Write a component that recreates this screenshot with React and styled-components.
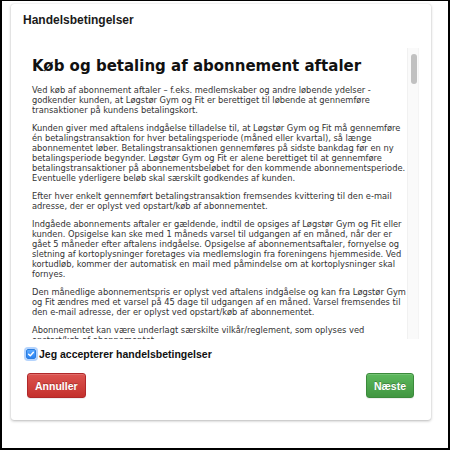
import React, { useState } from "react";
import styled, { createGlobalStyle } from "styled-components";

const GlobalStyle = createGlobalStyle`
  * { box-sizing: border-box; }
  html, body { margin: 0; padding: 0; background: #fff; }
  body { font-family: "Liberation Sans", Arial, sans-serif; }
`;

const sections = [
  {
    title: "Priser og betaling",
    text: [
      "Alle priser er oplyst i danske kroner inklusive moms. Løgstør Gym og Fit forbeholder sig retten til at ændre priserne uden varsel for nye abonnementer. Betaling sker med betalingskort via en sikker betalingsløsning.",
      "Ved manglende betaling sendes en påmindelse til kunden. Betales beløbet ikke inden for den angivne frist, kan adgangen til centret blive spærret, indtil betalingen er gennemført.",
    ],
  },
  {
    title: "Fortrydelsesret",
    text: [
      "Der gives 14 dages fortrydelsesret ved køb af abonnementer via hjemmesiden. Fristen regnes fra den dag, hvor aftalen er indgået. Ønsker kunden at gøre brug af fortrydelsesretten, skal dette meddeles skriftligt til Løgstør Gym og Fit inden fristens udløb.",
      "Har kunden benyttet centret i fortrydelsesperioden, fratrækkes et forholdsmæssigt beløb for den periode, hvor abonnementet har været anvendt.",
    ],
  },
  {
    title: "Adgang og brug af centret",
    text: [
      "Abonnementet er personligt og må ikke overdrages til andre. Adgangskort eller adgangskode må ikke udlånes. Misbrug kan medføre øjeblikkelig ophævelse af abonnementet uden refusion af indbetalte beløb.",
      "Kunden er forpligtet til at følge centrets ordensregler samt anvisninger fra personalet. Træning sker på eget ansvar, og Løgstør Gym og Fit kan ikke gøres ansvarlig for skader opstået i forbindelse med træning.",
    ],
  },
  {
    title: "Pause i abonnementet",
    text: [
      "Ved sygdom, skade eller graviditet kan abonnementet sættes i bero mod fremvisning af dokumentation. Pausen skal aftales med Løgstør Gym og Fit og kan tidligst træde i kraft fra den efterfølgende måned.",
    ],
  },
  {
    title: "Persondata",
    text: [
      "Løgstør Gym og Fit behandler kundens personoplysninger i overensstemmelse med gældende lovgivning. Oplysningerne anvendes alene til administration af medlemskabet og videregives ikke til tredjemand uden kundens samtykke.",
      "Kortoplysninger opbevares ikke af Løgstør Gym og Fit, men håndteres af en godkendt betalingsudbyder. Kunden har til enhver tid ret til indsigt i de oplysninger, der er registreret om vedkommende.",
    ],
  },
  {
    title: "Klageadgang",
    text: [
      "Eventuelle klager over købet rettes i første omgang til Løgstør Gym og Fit. Fører henvendelsen ikke til en løsning, kan kunden indgive en klage til Center for Klageløsning via Forbrugerstyrelsens hjemmeside.",
      "Ved klage skal kunden angive sin e-mail adresse. Klagen behandles så hurtigt som muligt, og kunden vil modtage svar senest 14 dage efter, at klagen er modtaget.",
    ],
  },
  {
    title: "Ændring af betingelser",
    text: [
      "Løgstør Gym og Fit kan ændre disse handelsbetingelser med et varsel på mindst 30 dage. Ændringer meddeles til den e-mail adresse, der er oplyst ved opstart/køb af abonnementet, samt på foreningens hjemmeside.",
    ],
  },
];

const THUMB = 30;
const TRACK = 291 - 12;

const Check = () => (
  <svg width="8" height="8" viewBox="0 0 8 8">
    <path
      d="M1.6 4.2 L3.3 5.8 L6.4 2.2"
      fill="none"
      stroke="#fff"
      strokeWidth="1.4"
      strokeLinecap="round"
      strokeLinejoin="round"
    />
  </svg>
);

const App = () => {
  const [accepted, setAccepted] = useState(true);
  const [scrolled, setScrolled] = useState(0);

  const onScroll = (e) => {
    const el = e.currentTarget;
    const max = el.scrollHeight - el.clientHeight;
    setScrolled(max > 0 ? el.scrollTop / max : 0);
  };

  return (
    <Frame>
      <GlobalStyle />
      <Card>
        <CardTitle>Handelsbetingelser</CardTitle>
        <TermsPanel>
          <TermsBox onScroll={onScroll}>
            <TermsHeading>Køb og betaling af abonnement aftaler</TermsHeading>
            <Para>
              Ved køb af abonnement aftaler – f.eks. medlemskaber og andre
              løbende ydelser - godkender kunden, at Løgstør Gym og Fit er
              berettiget til løbende at gennemføre transaktioner på kundens
              betalingskort.
            </Para>
            <Para>
              Kunden giver med aftalens indgåelse tilladelse til, at Løgstør Gym
              og Fit må gennemføre én betalingstransaktion for hver
              betalingsperiode (måned eller kvartal), så længe abonnementet
              løber. Betalingstransaktionen gennemføres på sidste bankdag før en
              ny betalingsperiode begynder. Løgstør Gym og Fit er alene
              berettiget til at gennemføre betalingstransaktioner på
              abonnementsbeløbet for den kommende abonnementsperiode. Eventuelle
              yderligere beløb skal særskilt godkendes af kunden.
            </Para>
            <Para>
              Efter hver enkelt gennemført betalingstransaktion fremsendes
              kvittering til den e-mail adresse, der er oplyst ved opstart/køb
              af abonnementet.
            </Para>
            <Para>
              Indgåede abonnements aftaler er gældende, indtil de opsiges af
              Løgstør Gym og Fit eller kunden. Opsigelse kan ske med 1 måneds
              varsel til udgangen af en måned, når der er gået 5 måneder efter
              aftalens indgåelse. Opsigelse af abonnementsaftaler, fornyelse og
              sletning af kortoplysninger foretages via medlemslogin fra
              foreningens hjemmeside. Ved kortudløb, kommer der automatisk en
              mail med påmindelse om at kortoplysninger skal fornyes.
            </Para>
            <Para>
              Den månedlige abonnementspris er oplyst ved aftalens indgåelse og
              kan fra Løgstør Gym og Fit ændres med et varsel på 45 dage til
              udgangen af en måned. Varsel fremsendes til den e-mail adresse,
              der er oplyst ved opstart/køb af abonnementet.
            </Para>
            <Para>
              Abonnementet kan være underlagt særskilte vilkår/reglement, som
              oplyses ved opstart/køb af abonnementet.
            </Para>
            {sections.map((s) => (
              <React.Fragment key={s.title}>
                <SubHeading>{s.title}</SubHeading>
                {s.text.map((t, i) => (
                  <Para key={i}>{t}</Para>
                ))}
              </React.Fragment>
            ))}
          </TermsBox>
          <ScrollTrack>
            <ScrollThumb style={{ marginTop: scrolled * (TRACK - THUMB) }} />
          </ScrollTrack>
        </TermsPanel>

        <AcceptRow onClick={() => setAccepted(!accepted)}>
          <CheckBox $checked={accepted}>{accepted && <Check />}</CheckBox>
          Jeg accepterer handelsbetingelser
        </AcceptRow>

        <ButtonRow>
          <Button $variant="danger">Annuller</Button>
          <Button $variant="success">Næste</Button>
        </ButtonRow>
      </Card>
    </Frame>
  );
};

const Frame = styled.div`
  width: 450px;
  height: 450px;
  border: 2px solid #000;
  border-top-width: 1px;
  padding: 3px 17px 0 9px;
  background: #fff;
  overflow: hidden;
`;

const Card = styled.div`
  width: 420px;
  background: #fff;
  border-radius: 3px;
  box-shadow: 0 1px 3px rgba(0, 0, 0, 0.28), 0 0 1px rgba(0, 0, 0, 0.12);
  padding: 9px 12px 22px 12px;
`;

const CardTitle = styled.div`
  font-family: "Liberation Sans", Arial, sans-serif;
  font-weight: 700;
  font-size: 12px;
  line-height: 14px;
  color: #1a1a1a;
`;

const TermsPanel = styled.div`
  margin-top: 21px;
  height: 291px;
  display: flex;
`;

const TermsBox = styled.div`
  flex: 1;
  overflow-y: auto;
  padding: 9px 0 0 9px;
  font-family: Verdana, "DejaVu Sans", sans-serif;
  color: #333;
  scrollbar-width: none;

  &::-webkit-scrollbar {
    display: none;
  }
`;

const ScrollTrack = styled.div`
  width: 12px;
  flex-shrink: 0;
  padding: 6px 3px;
  background: #fafafa;
  border-left: 1px solid #f1f1f1;
  border-right: 1px solid #f4f4f4;
`;

const ScrollThumb = styled.div`
  width: 6px;
  height: ${THUMB}px;
  border-radius: 3px;
  background: #c1c1c1;
`;

const TermsHeading = styled.h1`
  margin: 0 0 10px 0;
  font-family: Verdana, "DejaVu Sans", sans-serif;
  font-weight: 700;
  font-size: 15px;
  line-height: 18px;
  color: #111;
`;

const SubHeading = styled.h2`
  margin: 12px 0 6px 0;
  font-weight: 700;
  font-size: 10px;
  line-height: 13px;
  color: #111;
`;

const Para = styled.p`
  margin: 0 0 8px 0;
  font-size: 8.3px;
  line-height: 10px;
`;

const AcceptRow = styled.label`
  display: flex;
  align-items: center;
  gap: 3px;
  margin-top: 8px;
  padding-left: 3px;
  font-family: "Liberation Sans", Arial, sans-serif;
  font-weight: 700;
  font-size: 10.5px;
  line-height: 14px;
  color: #111;
  cursor: pointer;
  user-select: none;
`;

const CheckBox = styled.span`
  width: 10px;
  height: 10px;
  border-radius: 2px;
  display: inline-flex;
  align-items: center;
  justify-content: center;
  background: ${(p) =>
    p.$checked ? "linear-gradient(#5aa9ff, #2a82f0)" : "#fff"};
  border: 1px solid ${(p) => (p.$checked ? "#2a7de0" : "#aaa")};
  box-shadow: 0 0 0 2px rgba(90, 160, 250, 0.45);
`;

const ButtonRow = styled.div`
  display: flex;
  justify-content: space-between;
  margin-top: 12px;
  padding: 0 5px 0 4px;
`;

const variants = {
  danger: {
    bg: "linear-gradient(#dc5450, #c4302c)",
    border: "#b0282a",
  },
  success: {
    bg: "linear-gradient(#5cb85c, #419641)",
    border: "#3b8a3b",
  },
};

const Button = styled.button`
  height: 25px;
  padding: 0 7px;
  border-radius: 3px;
  border: 1px solid ${(p) => variants[p.$variant].border};
  background: ${(p) => variants[p.$variant].bg};
  color: #fff;
  font-family: "Liberation Sans", Arial, sans-serif;
  font-weight: 700;
  font-size: 10.5px;
  text-shadow: 0 -1px 0 rgba(0, 0, 0, 0.25);
  box-shadow: inset 0 1px 0 rgba(255, 255, 255, 0.15),
    0 1px 1px rgba(0, 0, 0, 0.075);
  cursor: pointer;
`;

export default App;
